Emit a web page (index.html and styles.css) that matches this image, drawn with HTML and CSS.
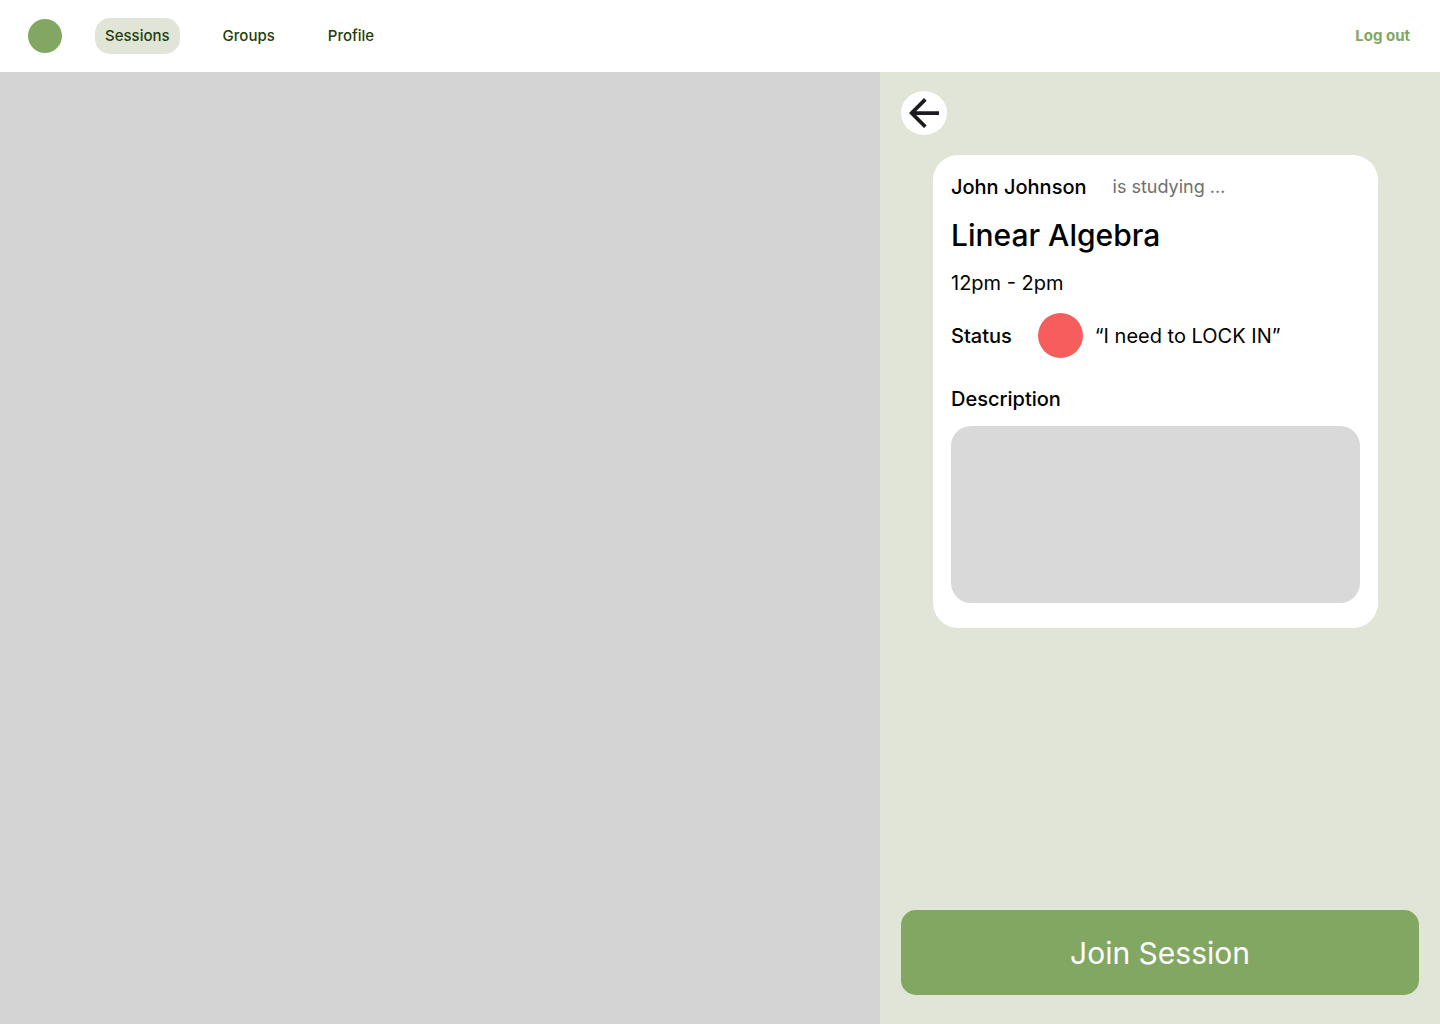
FILE: index.html
```html
<!DOCTYPE html>
<html lang="en">
<head>
  <meta charset="utf-8">
  <meta name="viewport" content="width=device-width, initial-scale=1">
  <title>Study session</title>
  <link rel="stylesheet" href="styles.css">
</head>
<body>
  <header class="topbar">
    <span class="logo"></span>
    <nav class="nav">
      <a class="nav-link nav-link-active" href="#sessions">Sessions</a>
      <a class="nav-link" href="#groups">Groups</a>
      <a class="nav-link" href="#profile">Profile</a>
    </nav>
    <a class="logout" href="#logout">Log out</a>
  </header>
  <main class="content">
    <div class="map"></div>
    <aside class="panel">
      <button class="back" type="button" aria-label="Back">
        <svg class="back-icon" viewBox="4 4 16 16" aria-hidden="true">
          <path d="M7.825 13L13.425 18.600L12 20L4 12L12 4L13.425 5.400L7.825 11H20V13Z" fill="#1d1b20"/>
        </svg>
      </button>
      <article class="card">
        <div class="host">
          <span class="label">John Johnson</span>
          <span class="host-note">is studying ...</span>
        </div>
        <h1 class="subject">Linear Algebra</h1>
        <p class="text">12pm - 2pm</p>
        <div class="status">
          <span class="label">Status</span>
          <span class="status-dot"></span>
          <span class="text">“I need to LOCK IN”</span>
        </div>
        <h2 class="label">Description</h2>
        <div class="description"></div>
      </article>
      <button class="join" type="button">Join Session</button>
    </aside>
  </main>
</body>
</html>
```
FILE: styles.css
```css
* {
  box-sizing: border-box;
}

body {
  display: flex;
  flex-direction: column;
  min-height: 100vh;
  margin: 0;
  background: #fff;
  color: #000;
  font-family: Inter, "Liberation Sans", sans-serif;
}

h1, h2, p {
  margin: 0;
}

button {
  border: 0;
  padding: 0;
  font-family: inherit;
  cursor: pointer;
}

.topbar {
  display: flex;
  align-items: center;
  height: 72px;
  padding: 0 30px 0 28px;
}

.logo {
  width: 34px;
  height: 34px;
  margin-right: 33px;
  border-radius: 50%;
  background: #82a762;
}

.nav {
  display: flex;
  gap: 33px;
}

.nav-link {
  padding: 0 10px;
  border-radius: 15px;
  color: #1f3d0c;
  font-size: 15px;
  font-weight: 500;
  line-height: 36px;
  text-decoration: none;
}

.nav-link-active {
  background: #e1e5d7;
}

.logout {
  margin-left: auto;
  color: #82a762;
  font-size: 15px;
  font-weight: 700;
  line-height: 36px;
  text-decoration: none;
}

.content {
  display: grid;
  flex: 1;
  grid-template-columns: 11fr 7fr;
}

.map {
  background: #d4d4d4;
}

.panel {
  display: flex;
  flex-direction: column;
  padding: 19px 21px 29px;
  background: #e1e5d7;
}

.back {
  display: grid;
  place-items: center;
  width: 46px;
  height: 44px;
  border-radius: 50%;
  background: #fff;
}

.back-icon {
  width: 30px;
  height: 30px;
}

.card {
  margin: 20px 41px 20px 32px;
  padding: 20px 18px 25px;
  border-radius: 25px;
  background: #fff;
}

.host {
  display: flex;
  align-items: center;
  gap: 26px;
}

.label {
  font-size: 20px;
  font-weight: 500;
  line-height: 24px;
}

.host-note {
  color: #6f6f6f;
  font-size: 18px;
  line-height: 24px;
}

.subject {
  margin: 18px 0;
  font-size: 30px;
  font-weight: 500;
  line-height: 36px;
}

.text {
  font-size: 20px;
  line-height: 24px;
}

.status {
  display: flex;
  align-items: center;
  margin: 18px 0 29px;
}

.status-dot {
  width: 45px;
  height: 45px;
  margin: 0 12px 0 26px;
  border-radius: 50%;
  background: #f65d5d;
}

.description {
  height: 177px;
  margin-top: 15px;
  border-radius: 20px;
  background: #d9d9d9;
}

.join {
  height: 85px;
  margin-top: auto;
  border-radius: 15px;
  background: #82a762;
  color: #fff;
  font-size: 30px;
}
```
